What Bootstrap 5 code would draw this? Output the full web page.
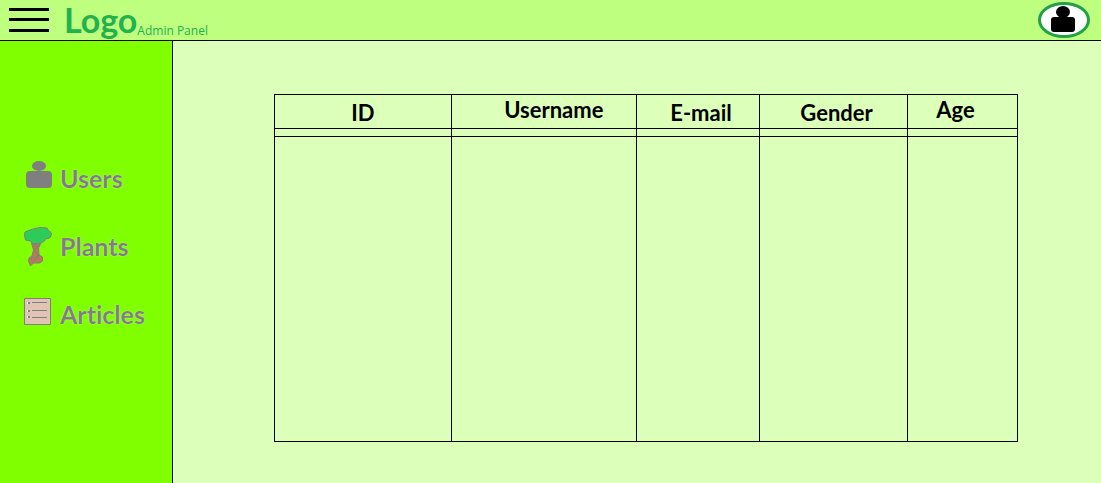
<!DOCTYPE html>
<html lang="en">
<head>
<meta charset="utf-8">
<meta name="viewport" content="width=device-width, initial-scale=1">
<title>Admin Panel</title>
<link href="https://cdn.jsdelivr.net/npm/bootstrap@5.3.0/dist/css/bootstrap.min.css" rel="stylesheet">
<style>
body { background: #dcffb9; font-family: Lato, "Open Sans", sans-serif; color: #000; font-variant-ligatures: none; }
.topbar { background: #bfff80; border-bottom: 1px solid #000; height: 41px; padding: 0 11px 0 9px; }
.plain-btn { background: none; border: 0; padding: 0; line-height: 0; }
.brand { color: #22b14c; margin-left: 15px; }
.brand:hover { color: #22b14c; }
.brand-name { font-size: 34px; line-height: 38px; font-weight: 700; }
.brand-sub { font-family: "Open Sans", sans-serif; font-size: 12px; line-height: 16px; }
.sidebar { background: #80ff00; border-right: 1px solid #000; width: 173px; padding: 116px 0 0 24px; gap: 28px; }
.side-link { color: #7f7f7f; font-size: 25px; line-height: 40px; font-weight: 700; gap: 8px; }
.side-text { padding-top: 2px; line-height: 38px; text-shadow: 0 0 1px #fff; }
.side-icon { width: 28px; height: 40px; flex: none; overflow: visible; }
.content { padding: 53px 83px 41px 101px; }
.grid-table { table-layout: fixed; width: 100%; height: 348px; border-collapse: collapse; }
.grid-table th, .grid-table td { border: 1px solid #000; padding: 0; }
.grid-table th { height: 34px; font-size: 22px; line-height: 30px; text-align: center; vertical-align: bottom; }
.grid-table .raised { vertical-align: top; }
.grid-table .push { padding-left: 20px; }
.grid-table .nudge { padding-left: 6px; }
.grid-table .pull { padding-right: 14px; }
.gap-row td { height: 8px; }
.c-id { width: 23.8%; } .c-user { width: 24.9%; } .c-mail { width: 16.6%; } .c-gender { width: 19.9%; }
</style>
</head>
<body class="d-flex flex-column min-vh-100">
<header class="topbar d-flex align-items-center">
  <button class="plain-btn" type="button" aria-label="Menu">
    <svg width="40" height="26" viewBox="0 0 40 26"><path d="M0 2.500h40M0 12.500h40M0 23.500h40" stroke="#000" stroke-width="3"/></svg>
  </button>
  <a class="brand d-flex align-items-end text-decoration-none" href="#"><span class="brand-name">Logo</span><span class="brand-sub">Admin Panel</span></a>
  <button class="plain-btn ms-auto" type="button" aria-label="Account">
    <svg width="52" height="36" viewBox="0 0 52 36"><ellipse cx="26" cy="18" rx="24.500" ry="16.500" fill="#fff" stroke="#22a047" stroke-width="3"/><ellipse cx="25" cy="10" rx="7" ry="6"/><rect x="13" y="15" width="24" height="15" rx="3"/></svg>
  </button>
</header>
<div class="d-flex flex-grow-1">
  <nav class="sidebar d-flex flex-column flex-shrink-0" aria-label="Sections">
    <a class="side-link d-flex text-decoration-none" href="#">
      <svg class="side-icon" viewBox="0 0 28 40" fill="#7f7f7f"><ellipse cx="15" cy="9" rx="7" ry="5"/><rect x="2" y="14" width="26" height="17" rx="4"/></svg>
      <span class="side-text">Users</span></a>
    <a class="side-link d-flex text-decoration-none" href="#">
      <svg class="side-icon" viewBox="0 0 28 40" stroke="#7f7f7f" stroke-linejoin="round"><path d="M7.500 18H17l-2.500 5 .5 7 3.500 2v4l-3 2h-6l-3 3-2-5 .5-3 3-2 1.500-6z" fill="#b97a57"/><path d="M9 19l6 5M16 19l-6 6M10 25l5 6-6 6M9 31l-2 4M14 30l-4 4" fill="none"/><path d="M.5 10L1 7l5-2 5-1.500 5-1 7 .5 1 2 3.500 3-.5 3-1.500 2-4 1-1 2-3.500 2-8 1-2.500-3-5-1-.5-2z" fill="#2dcc5a"/></svg>
      <span class="side-text">Plants</span></a>
    <a class="side-link d-flex text-decoration-none" href="#">
      <svg class="side-icon" viewBox="0 0 28 40"><path d="M.5 5.500h26v26H.500z" fill="#e2c4b4" stroke="#7f7f7f"/><path d="M8 9.500h15M8 17.500h15M8 24.500h15" stroke="#7f7f7f"/><path d="M3 10h3M3 18h3M3 24h3" stroke="#fff" stroke-width="2"/><path d="M4 10h2M4 18h2M4 24h2" stroke="#7f7f9f" stroke-width="2"/></svg>
      <span class="side-text">Articles</span></a>
  </nav>
  <main class="content flex-grow-1">
    <table class="grid-table">
      <colgroup><col class="c-id"><col class="c-user"><col class="c-mail"><col class="c-gender"><col></colgroup>
      <thead>
        <tr><th scope="col">ID</th><th scope="col" class="raised push">Username</th><th scope="col" class="nudge">E-mail</th><th scope="col" class="nudge">Gender</th><th scope="col" class="raised pull">Age</th></tr>
      </thead>
      <tbody>
        <tr class="gap-row"><td></td><td></td><td></td><td></td><td></td></tr>
        <tr><td></td><td></td><td></td><td></td><td></td></tr>
      </tbody>
    </table>
  </main>
</div>
<script src="https://cdn.jsdelivr.net/npm/bootstrap@5.3.0/dist/js/bootstrap.bundle.min.js"></script>
</body>
</html>
